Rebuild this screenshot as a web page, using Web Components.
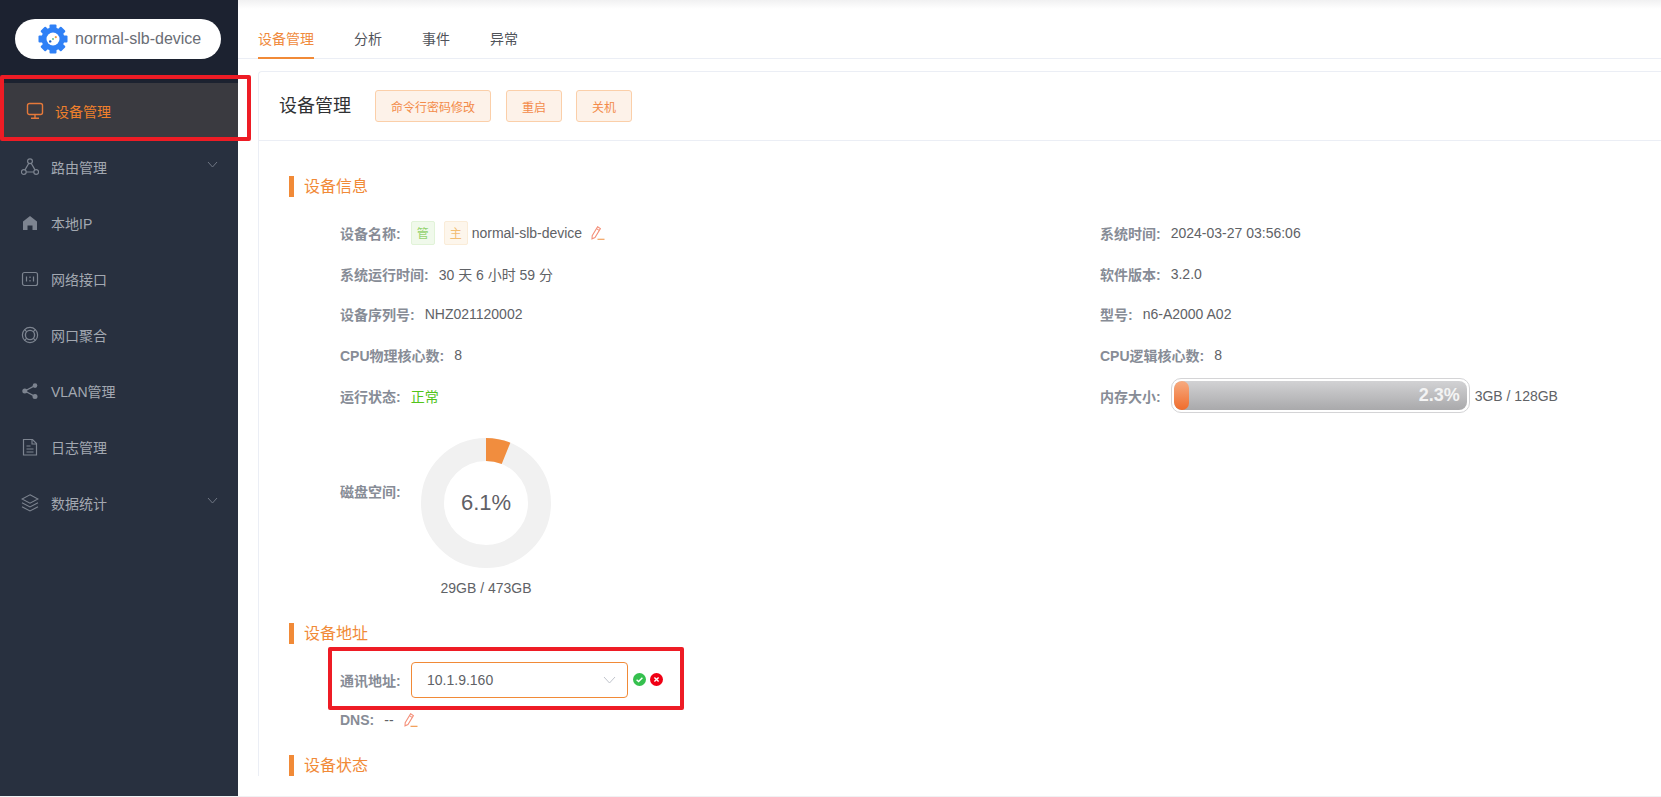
<!DOCTYPE html>
<html lang="zh">
<head>
<meta charset="utf-8">
<title>设备管理</title>
<style>
  html, body { margin: 0; height: 100%; overflow: hidden; background: #fff; }
  body { font-family: "Liberation Sans", "Noto Sans CJK SC", sans-serif; font-size: 14px; color: #606266; }
</style>
</head>
<body>
<app-shell>
  <side-bar slot="side">
    <nav-item active label="设备管理" icon="monitor"></nav-item>
    <nav-item label="路由管理" icon="route" arrow></nav-item>
    <nav-item label="本地IP" icon="home"></nav-item>
    <nav-item label="网络接口" icon="port"></nav-item>
    <nav-item label="网口聚合" icon="ring"></nav-item>
    <nav-item label="VLAN管理" icon="share"></nav-item>
    <nav-item label="日志管理" icon="doc"></nav-item>
    <nav-item label="数据统计" icon="layers" arrow></nav-item>
  </side-bar>
  <top-tabs></top-tabs>
  <device-card></device-card>
</app-shell>

<script>
const ICONS = {
  monitor: '<rect x="1.5" y="1.5" width="15" height="11" rx="2" fill="none" stroke="currentColor" stroke-width="1.4"/><path d="M9 13v3M5 16.3h8" fill="none" stroke="currentColor" stroke-width="1.4"/>',
  route: '<circle cx="9" cy="3.2" r="2.4" fill="none" stroke="currentColor" stroke-width="1.2"/><circle cx="2.8" cy="14" r="2.4" fill="none" stroke="currentColor" stroke-width="1.2"/><circle cx="15.2" cy="14" r="2.4" fill="none" stroke="currentColor" stroke-width="1.2"/><path d="M7.8 5.3 4 11.9M10.2 5.3 14 11.9M5.2 14h7.6" fill="none" stroke="currentColor" stroke-width="1.2"/>',
  home: '<path d="M9 2 16 7.5V16h-4.5v-4.5h-5V16H2V7.5z" fill="currentColor"/>',
  port: '<rect x="1.5" y="2.5" width="15" height="13" rx="2" fill="none" stroke="currentColor" stroke-width="1.2"/><path d="M5.5 6.5v5M9 6.5v1.6M9 10v1.5M12.5 6.5v5" fill="none" stroke="currentColor" stroke-width="1.2"/>',
  ring: '<circle cx="9" cy="9" r="7.6" fill="none" stroke="currentColor" stroke-width="1.2"/><circle cx="9" cy="9" r="4.6" fill="none" stroke="currentColor" stroke-width="1.4"/><path d="M3.7 3.7 5.8 5.8M14.3 3.7 12.2 5.8M3.7 14.3 5.8 12.2M14.3 14.3 12.2 12.2" fill="none" stroke="currentColor" stroke-width="1.2"/>',
  share: '<circle cx="14" cy="3.6" r="2.3" fill="currentColor"/><circle cx="3.8" cy="9" r="2.5" fill="currentColor"/><circle cx="14" cy="14.4" r="2.5" fill="currentColor"/><path d="M14 3.6 3.8 9 14 14.4" fill="none" stroke="currentColor" stroke-width="1.2"/>',
  doc: '<path d="M2.5 1.5h9l4 4v11.5h-13z" fill="none" stroke="currentColor" stroke-width="1.2"/><path d="M11 1.5V6h4.5M5.5 8h4M5.5 11h7M5.5 14h7" fill="none" stroke="currentColor" stroke-width="1.1"/>',
  layers: '<path d="M9 .8 17 5 9 9.2 1 5z" fill="none" stroke="currentColor" stroke-width="1.1"/><path d="M1 8.8 9 13l8-4.2M1 12.8 9 17l8-4.2" fill="none" stroke="currentColor" stroke-width="1.1"/>'
};

const PENCIL = `<svg width="14" height="14" viewBox="0 0 14 14" fill="none" stroke="#f4907a" stroke-width="1.1">
  <path d="M6.6 .8 9.4 2.6 4 11.6 1 12.8 1.2 9.6z"/><path d="M5.4 2.6 8.2 4.4"/><path d="M6.5 13.3h7" stroke="#f09040"/></svg>`;

class AppShell extends HTMLElement {
  constructor() {
    super();
    this.attachShadow({ mode: 'open' }).innerHTML = `
    <style>
      :host { display: grid; grid-template-columns: 238px 1fr; grid-template-rows: 59px 1fr; height: 796px; overflow: hidden; border-bottom: 1px solid #f1f1f3; }
      ::slotted(side-bar) { grid-row: 1 / 3; }
    </style>
    <slot name="side"></slot>
    <slot></slot>`;
  }
}

class SideBar extends HTMLElement {
  constructor() {
    super();
    this.attachShadow({ mode: 'open' }).innerHTML = `
    <style>
      :host { display: block; background: #28303f; height: 100%; position: relative; z-index: 2; }
      .top { background: #1c2230; height: 83px; box-sizing: border-box; padding: 19px 17px 0 15px; }
      .pill { height: 40px; background: #fff; border-radius: 20px; display: flex; align-items: center; gap: 7px; padding-left: 23px; font-size: 16px; color: #6a6d75; white-space: nowrap; }
      svg { display: block; flex: none; }
    </style>
    <div class="top">
      <div class="pill">
        <svg width="30" height="30" viewBox="0 0 30 30">
          <g fill="#2f80f6">
            <circle cx="15" cy="15" r="11.5"/>
            <rect x="11.5" y="0.5" width="7" height="7" rx="1"/>
            <rect x="11.5" y="22.5" width="7" height="7" rx="1"/>
            <rect x="0.5" y="11.5" width="7" height="7" rx="1"/>
            <rect x="22.5" y="11.5" width="7" height="7" rx="1"/>
            <rect x="11.5" y="0.5" width="7" height="7" rx="1" transform="rotate(45 15 15)"/>
            <rect x="11.5" y="22.5" width="7" height="7" rx="1" transform="rotate(45 15 15)"/>
            <rect x="0.5" y="11.5" width="7" height="7" rx="1" transform="rotate(45 15 15)"/>
            <rect x="22.5" y="11.5" width="7" height="7" rx="1" transform="rotate(45 15 15)"/>
          </g>
          <circle cx="15" cy="15" r="6.5" fill="#fff"/>
          <circle cx="12.2" cy="17.4" r="1.2" fill="#1f5fc4"/>
          <circle cx="15" cy="15" r="1" fill="#5cc48a"/>
          <circle cx="17.8" cy="13.2" r="1.1" fill="#f0a040"/>
        </svg>
        <span>normal-slb-device</span>
      </div>
    </div>
    <slot></slot>`;
  }
}

class NavItem extends HTMLElement {
  connectedCallback() {
    const root = this.shadowRoot || this.attachShadow({ mode: 'open' });
    const active = this.hasAttribute('active');
    const arrow = this.hasAttribute('arrow')
      ? '<svg class="arrow" width="11" height="7" viewBox="0 0 11 7" fill="none" stroke="#6f7683" stroke-width="1"><path d="M1 1l4.5 5L10 1"/></svg>' : '';
    root.innerHTML = `
    <style>
      :host { display: block; position: relative; height: 56px; }
      .row { height: 100%; display: flex; align-items: center; box-sizing: border-box; padding-left: 21px; font-size: 14px; color: #a3a8b1; }
      .icon { width: 18px; height: 18px; color: #7d8490; margin-right: 12px; flex: none; }
      .arrow { position: absolute; right: 20px; top: 22px; }
      :host([active]) { height: 54px; margin-bottom: 2px; }
      :host([active]) .row { background: #3a3a40; color: #f0802c; padding: 2px 0 0 26px; }
      :host([active]) .icon { color: #e5793a; margin-right: 11px; }
      .mark { position: absolute; left: 0; right: -13px; top: -8px; bottom: -4px; border: 4px solid #ee1c25; border-radius: 2px; pointer-events: none; }
    </style>
    <div class="row">
      <svg class="icon" viewBox="0 0 18 18">${ICONS[this.getAttribute('icon')]}</svg>
      <span>${this.getAttribute('label')}</span>
      ${arrow}
    </div>
    ${active ? '<div class="mark"></div>' : ''}`;
  }
}

class TopTabs extends HTMLElement {
  constructor() {
    super();
    this.attachShadow({ mode: 'open' }).innerHTML = `
    <style>
      :host { display: flex; gap: 40px; padding-left: 20px; height: 59px; box-sizing: border-box; border-bottom: 1px solid #ebeef5; background: linear-gradient(#f1f1f2, #fff 9px); }
      span { box-sizing: border-box; height: 59px; padding-top: 30px; line-height: 18px; font-size: 14px; color: #50535a; }
      .on { color: #f08a3c; border-bottom: 2px solid #f18a37; }
    </style>
    <span class="on">设备管理</span><span>分析</span><span>事件</span><span>异常</span>`;
  }
}

class ActionBtn extends HTMLElement {
  constructor() {
    super();
    this.attachShadow({ mode: 'open' }).innerHTML = `
    <style>
      :host { display: inline-flex; align-items: center; justify-content: center; box-sizing: border-box; height: 32px; padding: 0 15px; background: #fdf2e9; border: 1px solid #fbcfa9; border-radius: 3px; font-size: 12px; color: #f38b4a; }
    </style><slot></slot>`;
  }
}

class SectionTitle extends HTMLElement {
  constructor() {
    super();
    this.attachShadow({ mode: 'open' }).innerHTML = `
    <style>
      :host { display: block; height: 21px; line-height: 21px; border-left: 5px solid #f18a37; padding-left: 10px; font-size: 16px; color: #f18a37; }
    </style><slot></slot>`;
  }
}

class InfoRow extends HTMLElement {
  constructor() {
    super();
    this.attachShadow({ mode: 'open' }).innerHTML = `
    <style>
      :host { display: flex; align-items: center; height: 40.75px; font-size: 14px; color: #606266; white-space: nowrap; }
      b { color: #878c96; font-weight: 700; margin-right: 10px; }
    </style>
    <b></b><slot></slot>`;
    this.shadowRoot.querySelector('b').textContent = this.getAttribute('label');
  }
}

class TagMark extends HTMLElement {
  constructor() {
    super();
    this.attachShadow({ mode: 'open' }).innerHTML = `
    <style>
      :host { display: inline-flex; align-items: center; justify-content: center; box-sizing: border-box; width: 24px; height: 24px; border-radius: 2px; font-size: 12px; margin-right: 9px; }
      :host([kind="green"]) { background: #f0f9eb; border: 1px solid #e1f3d8; color: #94d36f; }
      :host([kind="orange"]) { background: #fdf6ec; border: 1px solid #faecd8; color: #f2bd72; margin-right: 4px; }
    </style><slot></slot>`;
  }
}

class MemBar extends HTMLElement {
  constructor() {
    super();
    this.attachShadow({ mode: 'open' }).innerHTML = `
    <style>
      :host { display: block; box-sizing: border-box; width: 299px; height: 35px; border: 1px solid #d4d4d6; border-radius: 10px; padding: 2px; margin-right: 5px; }
      .track { position: relative; height: 100%; border-radius: 8px; background: linear-gradient(#d2d2d4, #a9a9ab); overflow: hidden; text-align: right; }
      .fill { position: absolute; left: 0; top: 0; bottom: 0; width: 15px; border-radius: 7px; background: linear-gradient(#f7ab80, #f06c2c); }
      .txt { display: block; padding-right: 7px; line-height: 29px; font-size: 18px; font-weight: 700; color: #f4f4f4; }
    </style>
    <div class="track"><div class="fill"></div><span class="txt">2.3%</span></div>`;
  }
}

class DiskDonut extends HTMLElement {
  constructor() {
    super();
    this.attachShadow({ mode: 'open' }).innerHTML = `
    <style>
      :host { display: flex; align-items: flex-start; height: 207px; }
      b { color: #878c96; font-size: 14px; font-weight: 700; width: 81px; padding-top: 67px; line-height: 18px; white-space: nowrap; }
      .col { width: 130px; text-align: center; font-size: 14px; color: #606266; }
      .ring { position: relative; width: 130px; height: 130px; margin-top: 22px; }
      .ring span { position: absolute; left: 0; right: 0; top: 50%; transform: translateY(-50%); font-size: 22px; color: #5f6066; }
      svg { display: block; }
      .cap { margin-top: 11px; line-height: 18px; white-space: nowrap; }
    </style>
    <b>磁盘空间:</b>
    <div class="col">
      <div class="ring">
        <svg width="130" height="130" viewBox="0 0 130 130" fill="none" stroke-width="23">
          <circle cx="65" cy="65" r="53.5" stroke="#f1f1f1"/>
          <circle cx="65" cy="65" r="53.5" stroke="#f18d3e" stroke-dasharray="20.5 336.2" transform="rotate(-90 65 65)"/>
        </svg>
        <span>6.1%</span>
      </div>
      <div class="cap">29GB / 473GB</div>
    </div>`;
  }
}

class AddrSelect extends HTMLElement {
  constructor() {
    super();
    this.attachShadow({ mode: 'open' }).innerHTML = `
    <style>
      :host { display: flex; align-items: center; position: relative; height: 36px; font-size: 14px; }
      b { color: #878c96; font-weight: 700; width: 71px; white-space: nowrap; }
      .sel { box-sizing: border-box; width: 217px; height: 36px; border: 1px solid #f18a37; border-radius: 4px; display: flex; align-items: center; justify-content: space-between; padding: 0 11px 0 15px; color: #606266; }
      svg { display: block; }
      .ok { margin-left: 5px; }
      .no { margin-left: 4px; }
      .mark { position: absolute; left: -12px; top: -15px; width: 356px; height: 63px; box-sizing: border-box; border: 4px solid #ee1c25; border-radius: 2px; pointer-events: none; }
    </style>
    <b>通讯地址:</b>
    <div class="sel"><span>10.1.9.160</span>
      <svg width="13" height="8" viewBox="0 0 13 8" fill="none" stroke="#c0c4cc" stroke-width="1"><path d="M1 1l5.5 6L12 1"/></svg>
    </div>
    <svg class="ok" width="13" height="13" viewBox="0 0 13 13"><circle cx="6.5" cy="6.5" r="6.5" fill="#35c04e"/><path d="M3.6 6.8 5.6 8.6 9.4 4.8" fill="none" stroke="#fff" stroke-width="1.4"/></svg>
    <svg class="no" width="13" height="13" viewBox="0 0 13 13"><circle cx="6.5" cy="6.5" r="6.5" fill="#f00014"/><path d="M4.4 4.4l4.2 4.2M8.6 4.4 4.4 8.6" fill="none" stroke="#fff" stroke-width="1.4"/></svg>
    <div class="mark"></div>`;
  }
}

class DeviceCard extends HTMLElement {
  constructor() {
    super();
    this.attachShadow({ mode: 'open' }).innerHTML = `
    <style>
      :host { display: block; box-sizing: border-box; height: 705px; margin: 12px 0 0 20px; border: 1px solid #ebeef5; border-right: 0; border-bottom: 0; border-top-left-radius: 4px; overflow: hidden; }
      .head { height: 69px; box-sizing: border-box; border-bottom: 1px solid #ebeef5; display: flex; align-items: center; padding-left: 20px; }
      h1 { margin: -4px 24px 0 0; font-size: 18px; font-weight: 400; color: #303133; }
      action-btn + action-btn { margin-left: 15px; }
      action-btn + action-btn + action-btn { margin-left: 14px; }
      .body { padding: 35px 0 0 30px; }
      .grid { display: grid; grid-template-columns: 760px 1fr; padding: 15.5px 0 0 51px; }
      .rows { display: flex; flex-direction: column; }
      .name { margin-right: 9px; }
      .good { color: #52c41a; }
      svg { display: block; }
      .addr { margin: 17.5px 0 0 51px; }
      .dns { margin-left: 51px; margin-top: 2px; }
      .dns span { margin-right: 10px; }
      .last { margin-top: 14px; }
    </style>
    <div class="head">
      <h1>设备管理</h1>
      <action-btn>命令行密码修改</action-btn>
      <action-btn>重启</action-btn>
      <action-btn>关机</action-btn>
    </div>
    <div class="body">
      <section-title>设备信息</section-title>
      <div class="grid">
        <div class="rows">
          <info-row label="设备名称:"><tag-mark kind="green">管</tag-mark><tag-mark kind="orange">主</tag-mark><span class="name">normal-slb-device</span>${PENCIL}</info-row>
          <info-row label="系统运行时间:">30 天 6 小时 59 分</info-row>
          <info-row label="设备序列号:">NHZ021120002</info-row>
          <info-row label="CPU物理核心数:">8</info-row>
          <info-row label="运行状态:"><span class="good">正常</span></info-row>
          <disk-donut></disk-donut>
        </div>
        <div class="rows">
          <info-row label="系统时间:">2024-03-27 03:56:06</info-row>
          <info-row label="软件版本:">3.2.0</info-row>
          <info-row label="型号:">n6-A2000 A02</info-row>
          <info-row label="CPU逻辑核心数:">8</info-row>
          <info-row label="内存大小:"><mem-bar></mem-bar>3GB / 128GB</info-row>
        </div>
      </div>
      <section-title>设备地址</section-title>
      <addr-select class="addr"></addr-select>
      <info-row class="dns" label="DNS:"><span>--</span>${PENCIL}</info-row>
      <section-title class="last">设备状态</section-title>
    </div>`;
  }
}

customElements.define('app-shell', AppShell);
customElements.define('side-bar', SideBar);
customElements.define('nav-item', NavItem);
customElements.define('top-tabs', TopTabs);
customElements.define('action-btn', ActionBtn);
customElements.define('section-title', SectionTitle);
customElements.define('info-row', InfoRow);
customElements.define('tag-mark', TagMark);
customElements.define('mem-bar', MemBar);
customElements.define('disk-donut', DiskDonut);
customElements.define('addr-select', AddrSelect);
customElements.define('device-card', DeviceCard);
</script>
</body>
</html>
